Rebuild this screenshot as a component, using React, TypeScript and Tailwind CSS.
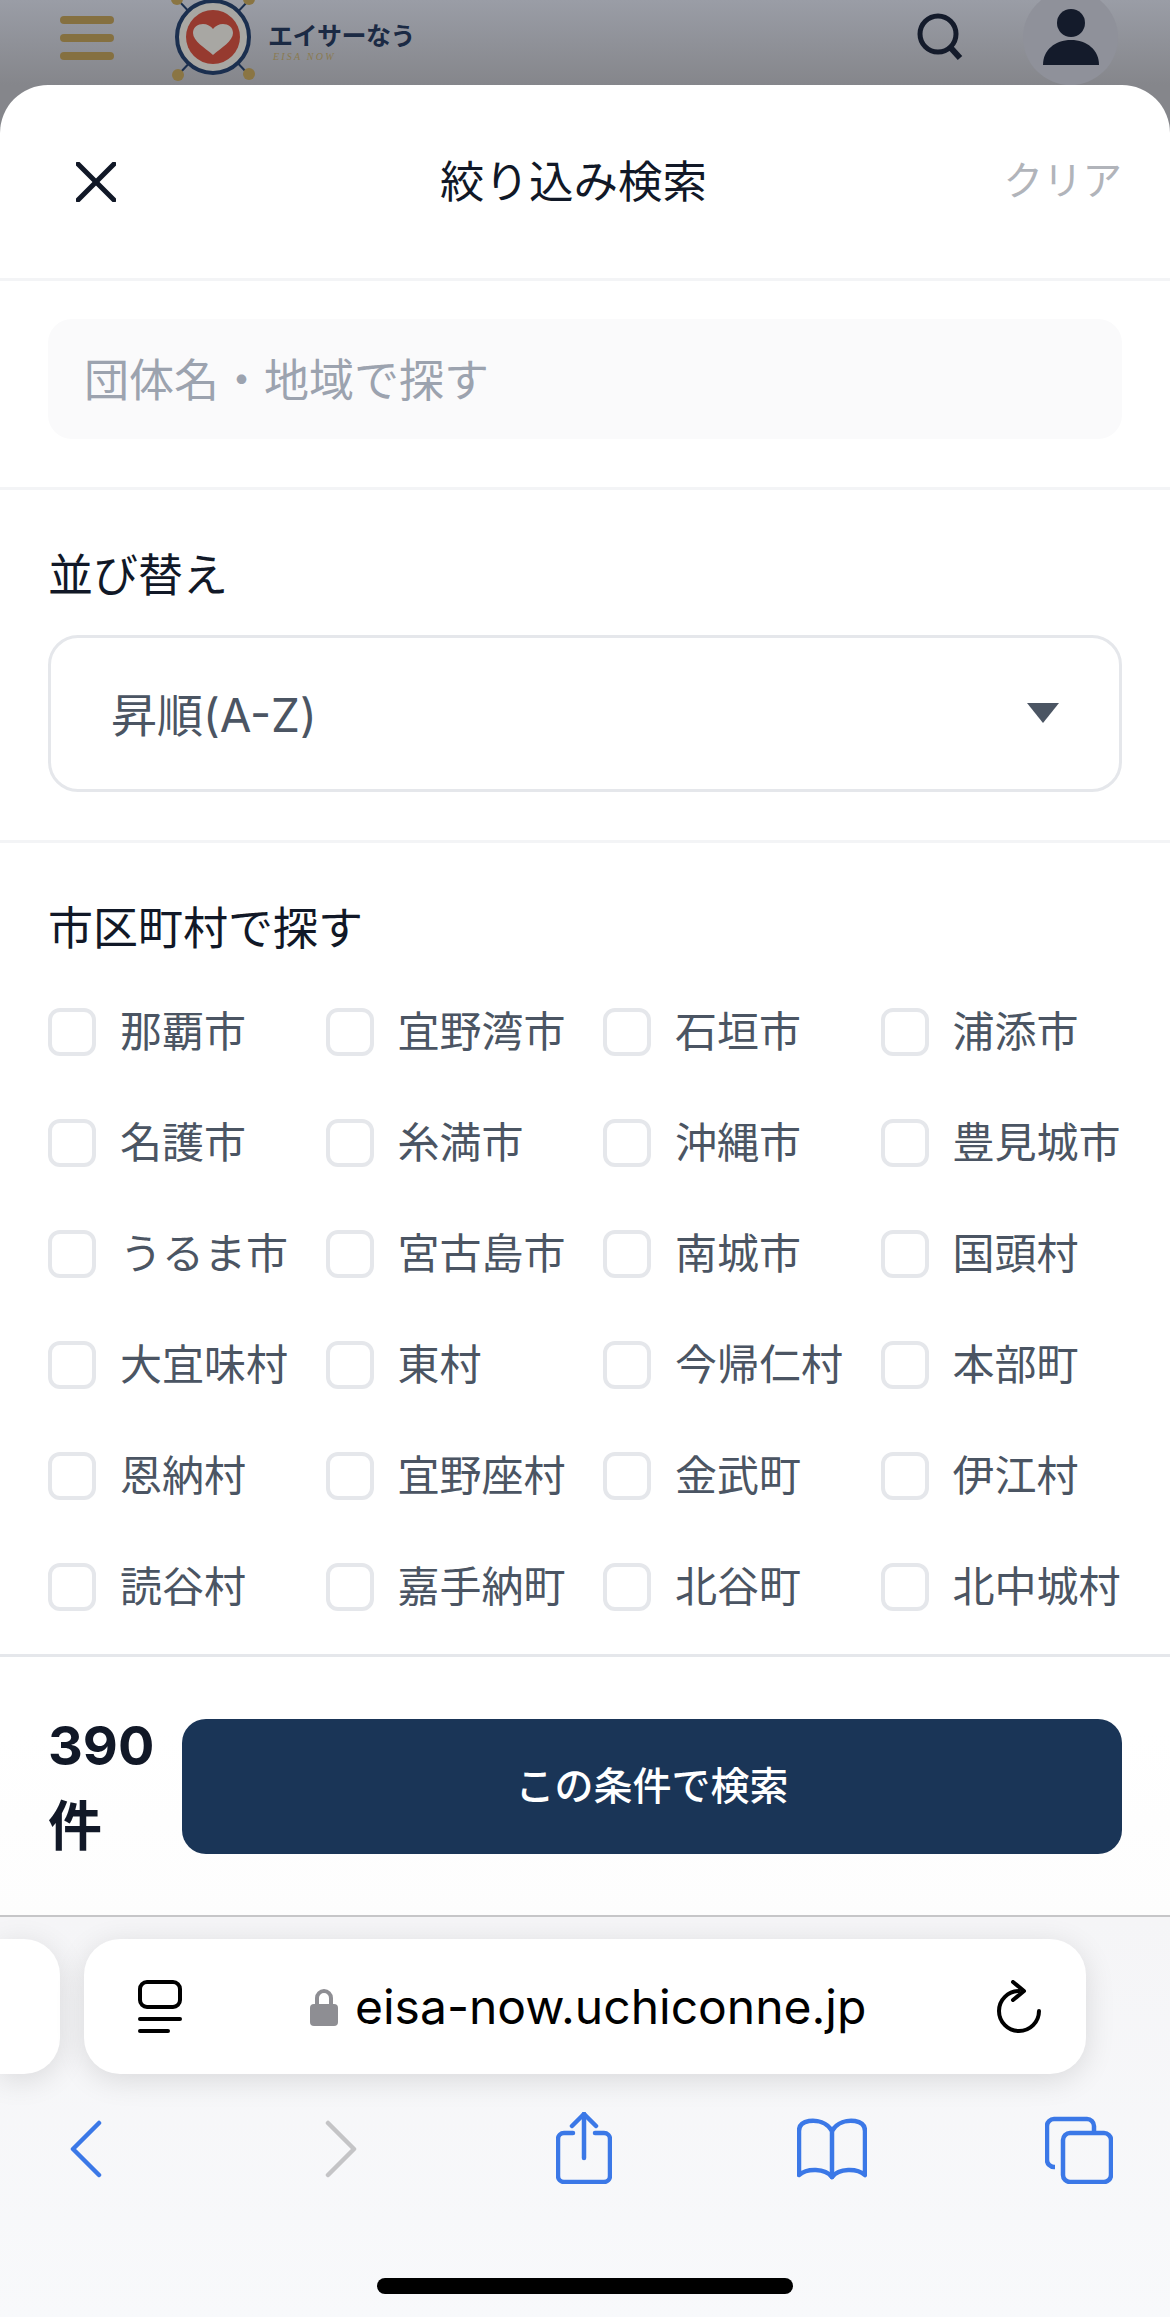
const cities = [
  "那覇市", "宜野湾市", "石垣市", "浦添市",
  "名護市", "糸満市", "沖縄市", "豊見城市",
  "うるま市", "宮古島市", "南城市", "国頭村",
  "大宜味村", "東村", "今帰仁村", "本部町",
  "恩納村", "宜野座村", "金武町", "伊江村",
  "読谷村", "嘉手納町", "北谷町", "北中城村",
];

function SiteHeader() {
  return (
    <header className="relative flex h-[85px] items-start overflow-hidden bg-gradient-to-b from-[#9a9da6] to-[#85868b] pl-[60px]">
      <div className="mt-[16px] flex w-[54px] flex-col gap-[10px]">
        <span className="h-[8px] rounded-full bg-[#857040]" />
        <span className="h-[8px] rounded-full bg-[#857040]" />
        <span className="h-[8px] rounded-full bg-[#857040]" />
      </div>
      <svg className="ml-[56px] shrink-0" width="90" height="85" viewBox="170 0 90 85">
        <g stroke="#1b2f4f" strokeWidth="2">
          <line x1="178" y1="0" x2="249" y2="75" />
          <line x1="249" y1="0" x2="178" y2="75" />
        </g>
        <g fill="#8a7543">
          <circle cx="177" cy="-1" r="6" />
          <circle cx="249" cy="-1" r="6" />
          <circle cx="178" cy="75" r="6" />
          <circle cx="249" cy="74" r="6" />
        </g>
        <circle cx="213" cy="37" r="36" fill="#a8a7a3" stroke="#1b2f4f" strokeWidth="4" />
        <circle cx="213" cy="37" r="27" fill="#963a2f" />
        <path d="M213 55C205 48 193 41 193 33C193 27 198 24 203 24C207 24 211 26 213 29C215 26 219 24 223 24C228 24 233 27 233 33C233 41 221 48 213 55Z" fill="#a8a7a3" />
      </svg>
      <div className="ml-[8px] flex flex-col">
        <span className="mt-[20px] text-[25px] leading-[32px] font-bold tracking-[-0.5px] whitespace-nowrap text-[#1b2a44]">エイサーなう</span>
        <span className="ml-[5px] font-['Liberation_Serif',serif] text-[10px] leading-[10px] tracking-[2.2px] whitespace-nowrap text-[#8a7a50] italic">EISA NOW</span>
      </div>
      <svg className="mt-[11px] ml-auto shrink-0" width="46" height="50" viewBox="0 0 46 50" fill="none" stroke="#141b2b" strokeWidth="5">
        <circle cx="21" cy="23" r="18" />
        <line x1="33" y1="36" x2="43" y2="47" strokeWidth="6" />
      </svg>
      <div className="mt-[-10px] mr-[52px] ml-[60px] flex h-[95px] w-[95px] shrink-0 items-start justify-center rounded-full bg-[#8f919a]">
        <svg className="mt-[19px]" width="56" height="56" viewBox="0 0 56 56" fill="#141b2b">
          <circle cx="28" cy="14" r="14" />
          <path d="M0 56C0 41 12 31 28 31C44 31 56 41 56 56Z" />
        </svg>
      </div>
    </header>
  );
}

function FilterSheet() {
  return (
    <section className="rounded-t-[48px] bg-gradient-to-b from-white from-90% to-[#fdfdfd]">
      <div className="flex h-[196px] items-center border-b-[3px] border-[#f3f4f6] pr-[48px] pl-[76px]">
        <svg width="40" height="40" viewBox="0 0 40 40" stroke="#111827" strokeWidth="5" strokeLinecap="round">
          <line x1="2" y1="2" x2="38" y2="38" />
          <line x1="38" y1="2" x2="2" y2="38" />
        </svg>
        <h2 className="ml-[324px] text-[44.5px] leading-[60px] font-normal text-[#111827]">絞り込み検索</h2>
        <button className="mt-[-2px] ml-auto text-[39.5px] leading-[60px] text-[#b1b4ba]">クリア</button>
      </div>

      <div className="border-b-[3px] border-[#f3f4f6] px-[48px] pt-[38px] pb-[48px]">
        <div className="flex h-[120px] items-center rounded-[24px] bg-[#fafafb] px-[36px] pt-[3px] text-[45px] text-[#9ca3af]">団体名・地域で探す</div>
      </div>

      <div className="border-b-[3px] border-[#f3f4f6] px-[48px] pt-[56px] pb-[48px]">
        <h3 className="text-[45px] leading-[60px] font-normal text-[#111827]">並び替え</h3>
        <div className="mt-[29px] flex h-[157px] items-center justify-between rounded-[30px] border-[3px] border-[#e5e7eb] pt-[4px] pr-[60px] pl-[60px] text-[46px] text-[#4b5563]">
          <span>昇順(A-Z)</span>
          <svg className="mt-[-5px]" width="32" height="20" viewBox="0 0 32 20" fill="#4b5563">
            <path d="M0 0H32L16 20Z" />
          </svg>
        </div>
      </div>

      <div className="px-[48px] pt-[56px]">
        <h3 className="text-[45px] leading-[60px] font-normal text-[#111827]">市区町村で探す</h3>
        <div className="mt-[49px] grid grid-cols-[277.5px_277.5px_277.5px_240px] gap-y-[63px]">
          {cities.map((city) => (
            <label key={city} className="flex h-[48px] items-center gap-[24px] whitespace-nowrap">
              <span className="h-[48px] w-[48px] shrink-0 rounded-[12px] border-[4px] border-[#e5e7eb] bg-white" />
              <span className="text-[42px] leading-[60px] text-[#4b5563]">{city}</span>
            </label>
          ))}
        </div>
      </div>

      <div className="mt-[43px] flex h-[261px] items-center border-t-[3px] border-[#e5e7eb] px-[48px]">
        <div className="w-[134px] text-[54px] leading-[81px] font-bold text-[#111827]">
          <div>390</div>
          <div>件</div>
        </div>
        <button className="flex h-[135px] flex-1 items-center justify-center rounded-[24px] bg-[#1a3557] text-[39px] font-medium text-white">この条件で検索</button>
      </div>
    </section>
  );
}

function BrowserChrome() {
  const blue = "#3b78e7";
  return (
    <footer className="flex-1 overflow-hidden border-t-2 border-[#c6c6c8] bg-gradient-to-b from-[#f5f5f7] to-[#f8f9fb]">
      <div className="mt-[22px] flex h-[135px] gap-[24px]">
        <div className="w-[60px] rounded-r-[36px] bg-white shadow-[0_6px_30px_rgba(0,0,0,0.12)]" />
        <div className="flex w-[1002px] items-center rounded-[36px] bg-white pr-[44px] pl-[54px] shadow-[0_6px_30px_rgba(0,0,0,0.12)]">
          <svg width="44" height="54" viewBox="0 0 44 54" fill="none" stroke="#000" strokeWidth="4" strokeLinecap="round">
            <rect x="2" y="2" width="40" height="25" rx="7" />
            <line x1="2" y1="39" x2="42" y2="39" />
            <line x1="2" y1="51" x2="30" y2="51" />
          </svg>
          <svg className="ml-[128px]" width="28" height="38" viewBox="0 0 28 38">
            <path d="M7 18V10a7 7 0 0 1 14 0v8" fill="none" stroke="#8e8e93" strokeWidth="4" />
            <rect x="0" y="16" width="28" height="22" rx="4" fill="#8e8e93" />
          </svg>
          <span className="ml-[17px] font-['Inter',sans-serif] text-[48px] leading-[60px] whitespace-nowrap text-black">eisa-now.uchiconne.jp</span>
          <svg className="ml-auto" width="46" height="54" viewBox="0 0 46 54" fill="none" stroke="#000" strokeWidth="4" strokeLinecap="round" strokeLinejoin="round">
            <path d="M23 11A20 20 0 1 0 43 31" />
            <path d="M17 2L28 11L17 20" />
          </svg>
        </div>
      </div>

      <div className="mt-[38px] flex h-[72px] items-start pl-[70px]">
        <svg width="32" height="72" viewBox="0 0 32 72" fill="none" stroke={blue} strokeWidth="4.5" strokeLinecap="round" strokeLinejoin="round">
          <path d="M29 11L3 37L29 63" />
        </svg>
        <svg className="ml-[223px]" width="32" height="72" viewBox="0 0 32 72" fill="none" stroke="#c4c4c6" strokeWidth="4.5" strokeLinecap="round" strokeLinejoin="round">
          <path d="M3 11L29 37L3 63" />
        </svg>
        <svg className="ml-[199px]" width="56" height="72" viewBox="0 0 56 72" fill="none" stroke={blue} strokeWidth="4.5" strokeLinecap="round" strokeLinejoin="round">
          <path d="M17 21H8a6 6 0 0 0-6 6v37a6 6 0 0 0 6 6h40a6 6 0 0 0 6-6V27a6 6 0 0 0-6-6h-9" />
          <path d="M28 46V2" />
          <path d="M16 14L28 2L40 14" />
        </svg>
        <svg className="ml-[185px]" width="70" height="72" viewBox="0 0 70 72" fill="none" stroke={blue} strokeWidth="4.5" strokeLinecap="round" strokeLinejoin="round">
          <path d="M35 19C30 10 20 8 12 9C6 10 2 13 2 19V63C10 56 28 56 35 65C42 56 60 56 68 63V19C68 13 64 10 58 9C50 8 40 10 35 19Z" />
          <path d="M35 19V65" />
        </svg>
        <svg className="ml-[178px]" width="68" height="72" viewBox="0 0 68 72" fill="none" stroke={blue} strokeWidth="4.5" strokeLinejoin="round">
          <path d="M10 55H9a7 7 0 0 1-7-7V14a7 7 0 0 1 7-7h33a7 7 0 0 1 7 7v5" />
          <rect x="18" y="21" width="48" height="49" rx="7" />
        </svg>
      </div>

      <div className="mt-[94px] flex justify-center">
        <div className="h-[16px] w-[416px] rounded-full bg-black" />
      </div>
    </footer>
  );
}

export default function App() {
  return (
    <div className="flex h-[2317px] w-[1170px] flex-col overflow-hidden bg-[#85868b] font-['Inter','Noto_Sans_CJK_JP',sans-serif]">
      <SiteHeader />
      <FilterSheet />
      <BrowserChrome />
    </div>
  );
}
